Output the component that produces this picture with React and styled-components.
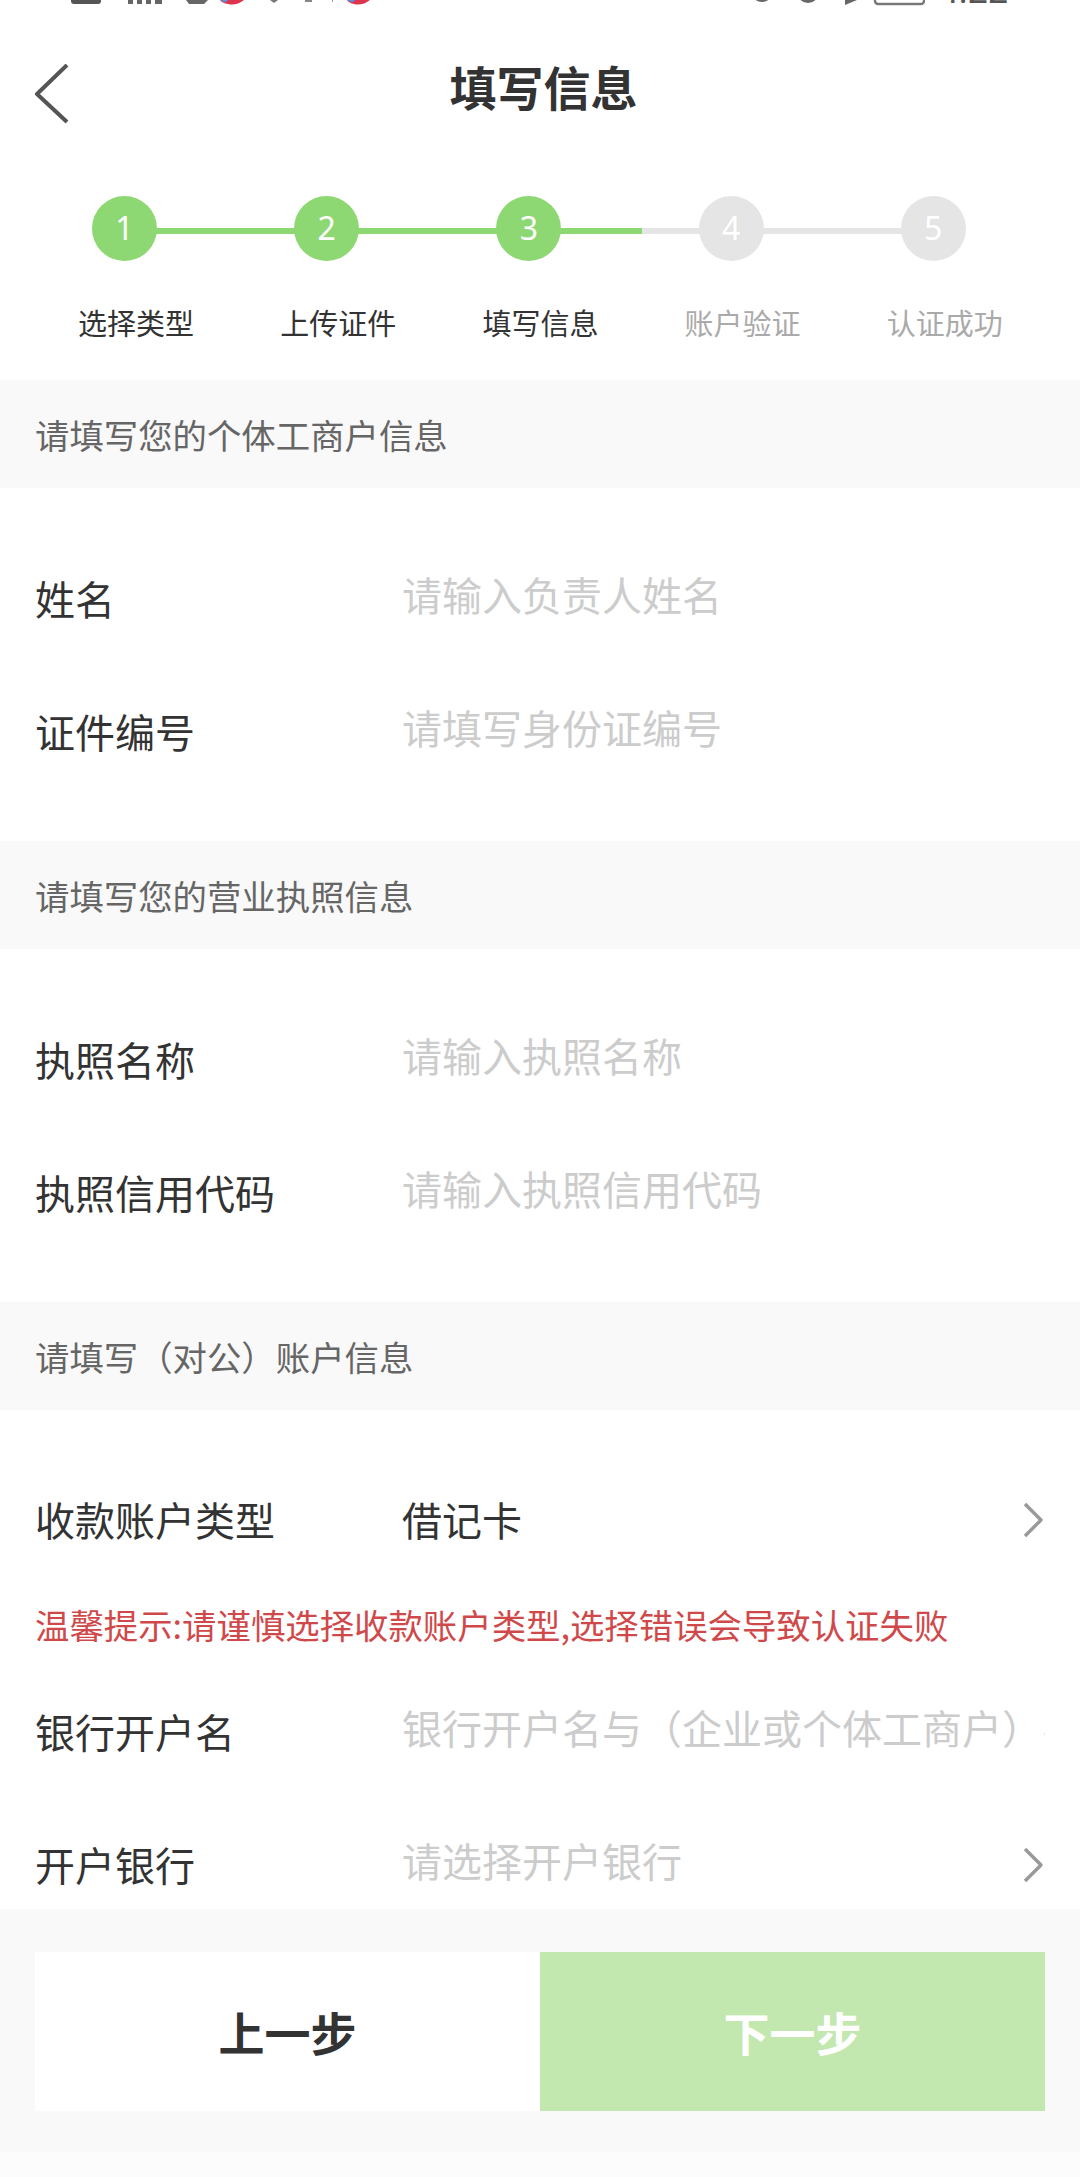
import styled, { createGlobalStyle } from "styled-components";

const GlobalStyle = createGlobalStyle`
  html, body {
    margin: 0;
    padding: 0;
    background: #fff;
    font-family: "Noto Sans CJK SC", "Liberation Sans", sans-serif;
  }
`;

const Page = styled.div`
  width: 1080px;
  height: 2177px;
  display: flex;
  flex-direction: column;
  overflow: hidden;
  background: #fff;
`;

const Scroll = styled.div`
  height: 1909px;
  overflow: hidden;
  flex: none;
`;

const StatusBar = styled.div`
  height: 6px;
  padding: 0 72px 0 71px;
  display: flex;
  justify-content: space-between;
  align-items: flex-start;
  overflow: hidden;
`;

const StatusRight = styled.div`
  display: flex;
  gap: 14px;
  align-items: flex-start;
`;

const Clock = styled.div`
  font-family: Roboto, "Liberation Sans", sans-serif;
  font-size: 36px;
  line-height: 36px;
  color: #555;
  margin-top: -27px;
`;

const NavBar = styled.div`
  height: 144px;
  display: flex;
  align-items: center;
  justify-content: center;
  position: relative;
`;

const BackIcon = styled.svg`
  position: absolute;
  left: 34px;
  top: 58px;
`;

const Title = styled.div`
  font-size: 47px;
  font-weight: 700;
  color: #333;
  margin: 14px 0 0 7px;
`;

const Steps = styled.div`
  height: 230px;
  display: flex;
  padding-left: 22px;
  position: relative;
`;

const Step = styled.div`
  width: 202.2px;
  display: flex;
  flex-direction: column;
  position: relative;
`;

const Line = styled.div`
  position: absolute;
  top: 78px;
  left: ${p => p.$left}px;
  width: ${p => p.$width}px;
  height: 6px;
  background: ${p => p.$done ? "#8ed873" : "#e5e5e5"};
`;

const Circle = styled.div`
  position: relative;
  width: 65px;
  height: 65px;
  margin: 46px 0 0 70px;
  border-radius: 50%;
  background: ${p => p.$done ? "#8ed873" : "#e5e5e5"};
  color: #fff;
  font-family: "Noto Sans", "Liberation Sans", sans-serif;
  font-size: 32px;
  line-height: 63px;
  text-align: center;
`;

const StepLabel = styled.div`
  margin: 40px 0 0 56px;
  width: 116px;
  font-size: 29px;
  line-height: 42px;
  white-space: nowrap;
  color: ${p => p.$done ? "#333" : "#aaa"};
`;

const SectionHead = styled.div`
  height: 108px;
  display: flex;
  align-items: center;
  padding-left: 35px;
  background: #f9f9f9;
  font-size: 34.4px;
  color: #666;
`;

const Section = styled.div`
  padding: ${p => p.$pad || "43px 0 44px"};
`;

const Row = styled.div`
  height: 133px;
  display: flex;
  align-items: center;
  padding: 0 35px;
`;

const Label = styled.div`
  width: 367px;
  flex: none;
  font-size: 40px;
  color: #333;
`;

const Value = styled.div`
  flex: 1;
  min-width: 0;
  font-size: 40px;
  color: ${p => p.$placeholder ? "#ccc" : "#333"};
  white-space: nowrap;
  overflow: hidden;
  margin-top: ${p => p.$placeholder ? -8 : 0}px;
`;

const Chevron = styled.svg`
  flex: none;
  margin: 2px 1px 0 8px;
`;

const Tip = styled.div`
  padding: 0 35px;
  font-size: 34.4px;
  line-height: 50px;
  color: #d0494a;
  white-space: nowrap;
  margin: 14px 0 15px;
`;

const BottomBar = styled.div`
  height: 243px;
  flex: none;
  box-sizing: border-box;
  padding: 43px 35px 41px;
  background: #f9f9f9;
  display: flex;
`;

const StepButton = styled.div`
  flex: 1;
  display: flex;
  align-items: center;
  justify-content: center;
  padding-bottom: 2px;
  font-size: 46px;
  font-weight: 700;
  background: ${p => p.$next ? "#c2e8b0" : "#fff"};
  color: ${p => p.$next ? "#fff" : "#333"};
`;

const Footer = styled.div`
  flex: 1;
  background: #fcfcfc;
`;

const steps = [
  { n: 1, label: "选择类型", done: true },
  { n: 2, label: "上传证件", done: true },
  { n: 3, label: "填写信息", done: true },
  { n: 4, label: "账户验证", done: false },
  { n: 5, label: "认证成功", done: false },
];

function RightArrow() {
  return (
    <Chevron width="22" height="36" viewBox="0 0 22 36" fill="none">
      <path d="M3 2 L19 18 L3 34" stroke="#999" strokeWidth="3.4" strokeLinejoin="round" />
    </Chevron>
  );
}

// only the bottom edge of the phone status bar is left in the shot
function StatusLeftIcons() {
  return (
    <svg width="300" height="6" viewBox="0 0 300 6">
      <rect x="0" y="-8" width="30" height="12" rx="3" fill="#555" />
      <rect x="57" y="0" width="5" height="4" fill="#666" />
      <rect x="66" y="0" width="5" height="4" fill="#666" />
      <rect x="75" y="0" width="5" height="4" fill="#666" />
      <rect x="84" y="0" width="7" height="4" fill="#666" />
      <path d="M115 0 H137 L133 4 H118 Z" fill="#666" />
      <path d="M149 0 H173 Q165 6 157 4 Q151 3 149 0 Z" fill="#e0344e" />
      <path d="M149 0 H157 Q155 3 153 2 Z" fill="#5a8fd8" />
      <path d="M199 0 H207 L203 3 Z" fill="#777" />
      <rect x="234" y="0" width="7" height="2" fill="#888" />
      <rect x="261" y="0" width="1" height="2" fill="#999" />
      <path d="M276 0 H299 Q291 6 283 4 Q278 3 276 0 Z" fill="#e0344e" />
      <path d="M276 0 H284 Q282 3 280 2 Z" fill="#5a8fd8" />
    </svg>
  );
}

function StatusRightIcons() {
  return (
    <svg width="174" height="6" viewBox="0 0 174 6">
      <circle cx="11" cy="-9" r="11" fill="#666" />
      <circle cx="57" cy="-8" r="11" fill="#666" />
      <path d="M94 0 H106 L94 5 Z" fill="#666" />
      <rect x="124" y="-10" width="49" height="14" rx="3" fill="none" stroke="#777" strokeWidth="2.4" />
    </svg>
  );
}

export default function App() {
  return (
    <Page>
      <GlobalStyle />
      <Scroll>
        <StatusBar>
          <StatusLeftIcons />
          <StatusRight>
            <StatusRightIcons />
            <Clock>4:22</Clock>
          </StatusRight>
        </StatusBar>
        <NavBar>
          <BackIcon width="36" height="60" viewBox="0 0 36 60" fill="none">
            <path d="M33 1 L3 30 L33 58" stroke="#555" strokeWidth="4" strokeLinejoin="round" />
          </BackIcon>
          <Title>填写信息</Title>
        </NavBar>
        <Steps>
          <Line $left={100} $width={542} $done />
          <Line $left={642} $width={291} />
          {steps.map(s => (
            <Step key={s.n}>
              <Circle $done={s.done}>{s.n}</Circle>
              <StepLabel $done={s.done}>{s.label}</StepLabel>
            </Step>
          ))}
        </Steps>
        <SectionHead>请填写您的个体工商户信息</SectionHead>
        <Section>
          <Row>
            <Label>姓名</Label>
            <Value $placeholder>请输入负责人姓名</Value>
          </Row>
          <Row>
            <Label>证件编号</Label>
            <Value $placeholder>请填写身份证编号</Value>
          </Row>
        </Section>
        <SectionHead>请填写您的营业执照信息</SectionHead>
        <Section>
          <Row>
            <Label>执照名称</Label>
            <Value $placeholder>请输入执照名称</Value>
          </Row>
          <Row>
            <Label>执照信用代码</Label>
            <Value $placeholder>请输入执照信用代码</Value>
          </Row>
        </Section>
        <SectionHead>请填写（对公）账户信息</SectionHead>
        <Section $pad="42px 0 0">
          <Row>
            <Label>收款账户类型</Label>
            <Value>借记卡</Value>
            <RightArrow />
          </Row>
          <Tip>温馨提示:请谨慎选择收款账户类型,选择错误会导致认证失败</Tip>
          <Row>
            <Label>银行开户名</Label>
            <Value $placeholder>银行开户名与（企业或个体工商户）名称一致</Value>
          </Row>
          <Row>
            <Label>开户银行</Label>
            <Value $placeholder>请选择开户银行</Value>
            <RightArrow />
          </Row>
        </Section>
      </Scroll>
      <BottomBar>
        <StepButton>上一步</StepButton>
        <StepButton $next>下一步</StepButton>
      </BottomBar>
      <Footer />
    </Page>
  );
}
